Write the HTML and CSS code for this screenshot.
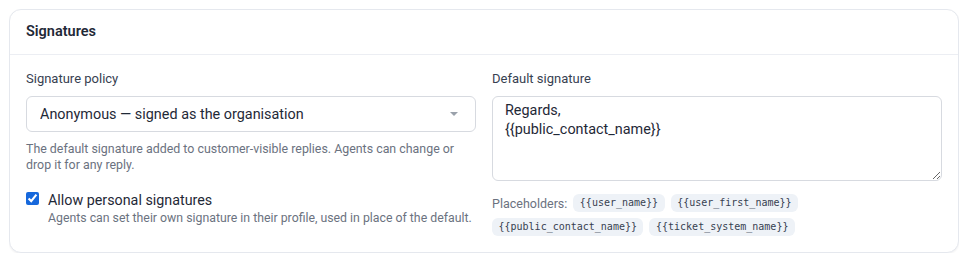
FILE: index.html
```html
<!DOCTYPE html>
<html lang="en">
<head>
<meta charset="utf-8">
<title>Signatures</title>
<link rel="stylesheet" href="styles.css">
</head>
<body>
<section class="card">
  <header class="card-header">
    <h2 class="card-title">Signatures</h2>
  </header>
  <div class="card-body">
    <div class="col">
      <label class="field-label" for="policy">Signature policy</label>
      <div class="select-wrap">
        <select id="policy" class="select">
          <option>Anonymous — signed as the organisation</option>
        </select>
      </div>
      <p class="help">The default signature added to customer-visible replies. Agents can change or drop it for any reply.</p>
      <div class="check-row">
        <input type="checkbox" id="allow" class="checkbox" checked>
        <div class="check-text">
          <label for="allow" class="check-label">Allow personal signatures</label>
          <div class="check-desc">Agents can set their own signature in their profile, used in place of the default.</div>
        </div>
      </div>
    </div>
    <div class="col">
      <label class="field-label" for="sig">Default signature</label>
      <textarea id="sig" class="textarea">Regards,
{{public_contact_name}}</textarea>
      <div class="placeholders">
        <span class="ph-label">Placeholders:</span>
        <code class="chip">{{user_name}}</code>
        <code class="chip">{{user_first_name}}</code>
        <code class="chip">{{public_contact_name}}</code>
        <code class="chip">{{ticket_system_name}}</code>
      </div>
    </div>
  </div>
</section>
</body>
</html>
```

FILE: styles.css
```css
* { box-sizing: border-box; }

body {
  margin: 9px;
  background: #ffffff;
  font-family: Roboto, "Noto Sans", sans-serif;
  color: #1f2937;
}

.card {
  border: 1px solid #e5e8ee;
  border-radius: 12px;
  background: #fff;
  box-shadow: 0 1px 2px rgba(16, 24, 40, 0.06);
}

.card-header {
  padding: 12px 16px;
  border-bottom: 1px solid #eceef3;
}

.card-title {
  margin: 0;
  font-size: 14.5px;
  line-height: 20px;
  font-weight: 600;
  color: #1f2937;
}

.card-body {
  display: grid;
  grid-template-columns: 1fr 1fr;
  column-gap: 16px;
  padding: 16px 16px 16px;
}

.col {
  display: flex;
  flex-direction: column;
  min-width: 0;
}

.field-label {
  font-size: 13px;
  line-height: 16px;
  color: #374151;
  margin-bottom: 9px;
}

.select-wrap {
  position: relative;
}

.select-wrap::after {
  content: "";
  position: absolute;
  right: 18px;
  top: 16px;
  border-left: 4px solid transparent;
  border-right: 4px solid transparent;
  border-top: 4px solid #9aa1ab;
}

.select {
  appearance: none;
  -webkit-appearance: none;
  width: 100%;
  height: 36px;
  padding: 0 32px 0 13px;
  border: 1px solid #d7dae0;
  border-radius: 6px;
  background: #fff;
  font-family: inherit;
  font-size: 14.4px;
  color: #1f2937;
}

.help {
  margin: 9px 0 0;
  font-size: 12.4px;
  line-height: 16px;
  color: #6b7280;
}

.check-row {
  display: flex;
  align-items: flex-start;
  gap: 9px;
  margin-top: 18px;
}

.checkbox {
  margin: 1px 0 0;
  width: 13px;
  height: 13px;
  accent-color: #1668dc;
  flex: none;
}

.check-text {
  display: flex;
  flex-direction: column;
}

.check-label {
  font-size: 14.3px;
  line-height: 18px;
  color: #1f2937;
}

.check-desc {
  font-size: 12.3px;
  line-height: 16px;
  color: #6b7280;
  margin-top: 1px;
}

.textarea {
  width: 100%;
  height: 85px;
  padding: 4px 12px;
  border: 1px solid #d7dae0;
  border-radius: 6px;
  font-family: inherit;
  font-size: 14.4px;
  line-height: 19px;
  color: #1f2937;
  resize: vertical;
}

.placeholders {
  display: flex;
  flex-wrap: wrap;
  align-items: center;
  gap: 6px;
  margin-top: 13px;
}

.ph-label {
  font-size: 12.5px;
  color: #6b7280;
}

.chip {
  font-family: "DejaVu Sans Mono", monospace;
  font-size: 10px;
  line-height: 14px;
  padding: 2px 6.5px;
  border-radius: 6px;
  background: #eef2f7;
  color: #374151;
}
```
